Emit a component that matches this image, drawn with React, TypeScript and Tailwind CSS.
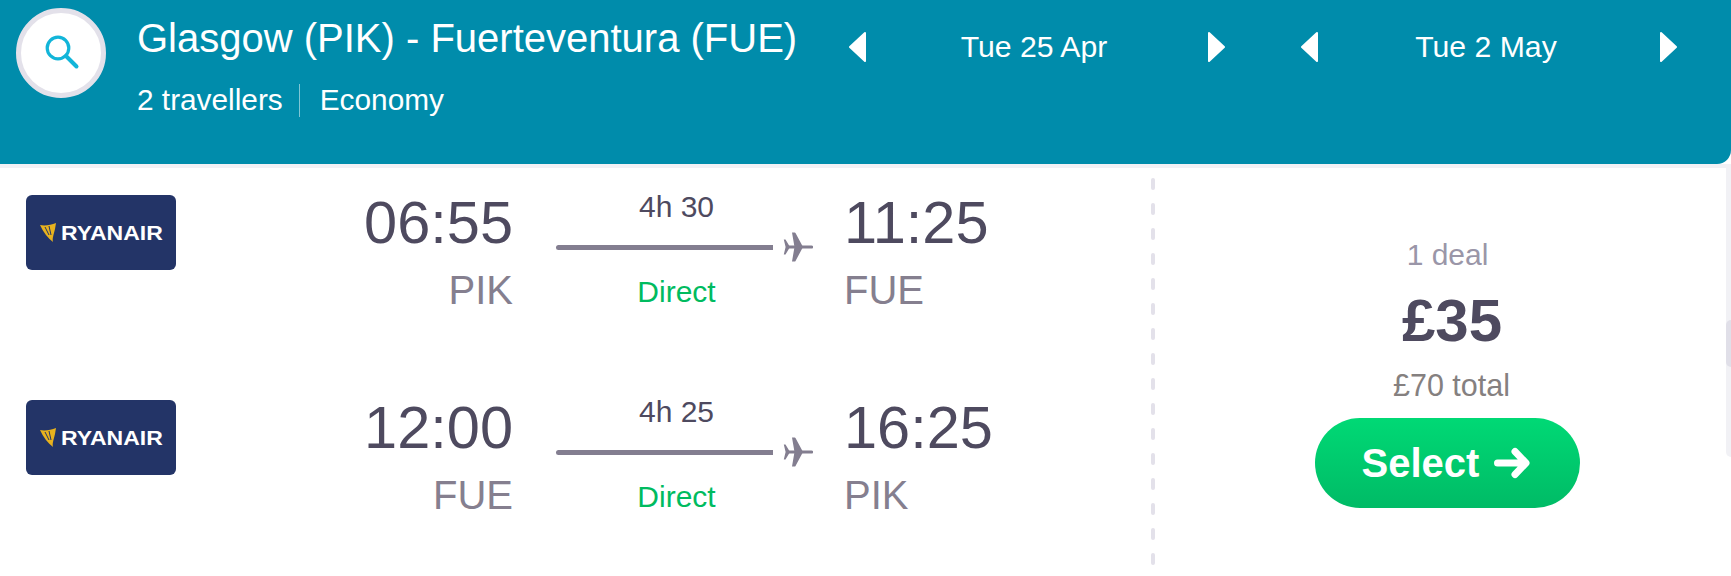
import React from 'react';

const dashes = Array.from({ length: 16 }, (_, i) => i);

const flights = [
    { logoKey: 'out', dep: '06:55', from: 'PIK', duration: '4h 30', arr: '11:25', to: 'FUE' },
    { logoKey: 'back', dep: '12:00', from: 'FUE', duration: '4h 25', arr: '16:25', to: 'PIK' },
];

const DateNav: React.FC<{ label: string }> = ({ label }) => (
    <div className="flex w-[376px] items-center justify-between">
        <svg width="17" height="30" viewBox="0 0 17 30" fill="#fff" stroke="#fff" strokeWidth="2" strokeLinejoin="round">
            <path d="M16 1 L1 15 L16 29 Z" />
        </svg>
        <span className="mr-[6px] text-[30.2px] text-white">{label}</span>
        <svg width="17" height="30" viewBox="0 0 17 30" fill="#fff" stroke="#fff" strokeWidth="2" strokeLinejoin="round">
            <path d="M1 1 L16 15 L1 29 Z" />
        </svg>
    </div>
);

const RyanairLogo: React.FC = () => (
    <div className="flex h-[75px] w-[150px] shrink-0 items-center rounded-[6px] bg-[#233467] pl-[14px]">
        <svg width="17" height="19" viewBox="0 0 17 19" className="shrink-0">
            <path d="M0 2 C5 3 11 2 16 0 L15 6 C14 11 12 15 13 19 C8 15 3 9 0 2 Z" fill="#e8b21e" />
            <path d="M5 4 L9 12 M9 3 L11 12" stroke="#233467" strokeWidth="1" />
        </svg>
        <span className="ml-[4px] origin-left scale-x-[1.15] text-[20px] font-bold leading-none text-white">
            RYANAIR
        </span>
    </div>
);

const PlaneIcon: React.FC = () => (
    <svg width="30" height="30" viewBox="0 0 30 30" fill="#837e90">
        <path d="M5 13.4 H28.5 a1.6 1.6 0 0 1 0 3.2 H5 Z" />
        <path d="M20 15 L12.5 1 a1 1 0 0 0 -1 -0.5 H9 L11.5 15 L9 29.5 H11.5 a1 1 0 0 0 1 -0.5 Z" />
        <path d="M7 15 L2.5 7.5 H0.8 L2.6 15 L0.8 22.5 H2.5 Z" />
    </svg>
);

const FlightRow: React.FC<(typeof flights)[number]> = ({ dep, from, duration, arr, to }) => (
    <div className="flex h-[205px] items-start">
        <div className="ml-[26px] mt-[27px]">
            <RyanairLogo />
        </div>
        <div className="ml-[162px] flex w-[175px] flex-col items-end pt-[25px]">
            <span className="text-[59.5px] leading-[60px] text-[#4e4a5f]">{dep}</span>
            <span className="mt-[14px] text-[40px] leading-[46px] text-[#857f8f]">{from}</span>
        </div>
        <div className="ml-[43px] flex w-[257px] flex-col pt-[21px]">
            <span className="w-[241px] text-center text-[30px] leading-[36px] text-[#4e4a5f]">{duration}</span>
            <div className="mt-[7px] flex h-[30px] items-center gap-[10px]">
                <div className="h-[5px] w-[217px] rounded-l-full bg-[#837e90]" />
                <PlaneIcon />
            </div>
            <span className="mt-[12px] w-[241px] text-center text-[30px] leading-[36px] text-[#00bb5f]">Direct</span>
        </div>
        <div className="ml-[31px] flex flex-col pt-[25px]">
            <span className="text-[59.5px] leading-[60px] text-[#4e4a5f]">{arr}</span>
            <span className="mt-[14px] text-[40px] leading-[46px] text-[#857f8f]">{to}</span>
        </div>
    </div>
);

export default function App() {
    return (
        <div className="flex h-[576px] w-[1731px] flex-col overflow-hidden bg-white font-['Liberation_Sans',Arial,sans-serif]">
            <header className="flex h-[164px] shrink-0 items-start rounded-br-[14px] bg-[#008cab] pl-[16px]">
                <div className="mt-[8px] flex h-[90px] w-[90px] shrink-0 items-center justify-center rounded-full border-[5px] border-[#e3e1ea] bg-white">
                    <svg width="40" height="40" viewBox="0 0 40 40" fill="none" stroke="#12b5d9" className="ml-[3px] mt-[2px]">
                        <circle cx="15" cy="14" r="10.8" strokeWidth="3.2" />
                        <path d="M23 22 L33.5 32.5" strokeWidth="4" strokeLinecap="round" />
                    </svg>
                </div>
                <div className="ml-[31px] w-[712px] shrink-0 pt-[16px] text-white">
                    <h1 className="whitespace-nowrap text-[40px] leading-[44px]">Glasgow (PIK) - Fuerteventura (FUE)</h1>
                    <div className="mt-[24px] flex h-[33px] items-center text-[29.8px]">
                        <span>2 travellers</span>
                        <span className="ml-[16px] mr-[20px] h-[33px] w-px bg-white/50" />
                        <span>Economy</span>
                    </div>
                </div>
                <div className="mt-[24px] flex gap-[76px]">
                    <DateNav label="Tue 25 Apr" />
                    <DateNav label="Tue 2 May" />
                </div>
            </header>
            <div className="h-[4px] shrink-0 bg-[#f1f1f5]" />
            <main className="flex min-h-0 flex-1">
                <div className="w-[1151px] shrink-0">
                    {flights.map((f) => (
                        <FlightRow key={f.logoKey} {...f} />
                    ))}
                </div>
                <div className="flex w-[4px] shrink-0 flex-col gap-[13px] pt-[10px]">
                    {dashes.map((d) => (
                        <div key={d} className="h-[12px] w-[4px] shrink-0 rounded-full bg-[#e3e1ea]" />
                    ))}
                </div>
                <div className="flex flex-1 flex-col items-center pl-[14px] pt-[68px]">
                    <span className="text-[30px] leading-[38px] text-[#9a96a8]">1 deal</span>
                    <span className="mt-[17px] pl-[9px] text-[60px] font-bold leading-[60px] text-[#4e4a5f]">£35</span>
                    <span className="mt-[15px] pl-[8px] text-[30.5px] leading-[38px] text-[#858080]">£70 total</span>
                    <button className="relative mt-[14px] flex h-[90px] w-[265px] items-center justify-center gap-[15px] rounded-full bg-gradient-to-b from-[#00d975] to-[#00bb66] pr-[3px] text-[40px] font-bold text-white">
                        Select
                        <svg width="36" height="32" viewBox="0 0 36 32" fill="none" stroke="#fff" strokeWidth="7" strokeLinecap="round" strokeLinejoin="round">
                            <path d="M3.5 16 H31 M21 4.5 L32 16 L21 27.5" />
                        </svg>
                    </button>
                </div>
                <div className="relative h-[289px] w-[5px] shrink-0 rounded-bl-[5px] bg-[#f1f1f5]">
                    <div className="absolute left-0 top-[152px] h-[47px] w-[5px] rounded-l-full bg-[#e0dfe8]" />
                </div>
            </main>
        </div>
    );
}
